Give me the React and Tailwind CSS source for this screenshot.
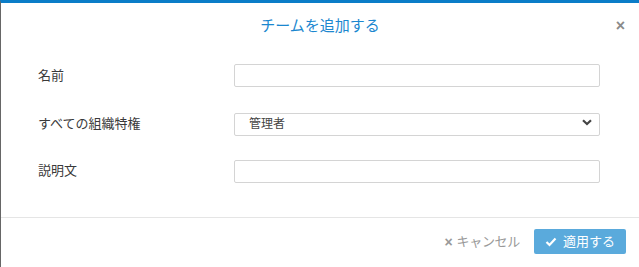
import React, { useState } from "react";

function AddTeamModal() {
  const [name, setName] = useState("");
  const [role, setRole] = useState("admin");
  const [desc, setDesc] = useState("");

  return (
    <div className="h-[267px] w-[639px] bg-white border-l border-[#666] border-t-[3px] border-t-[#0b7dc8] flex flex-col text-[#3a3a3a] [font-family:'Liberation_Sans','Noto_Sans_CJK_JP',sans-serif]">
      <div className="relative h-[45px] flex items-center justify-center">
        <h3 className="text-[15px] text-[#1b87cf] pt-[1px]">チームを追加する</h3>
        <button className="absolute right-[14px] top-[15px] text-[#8a8a8a] text-[16px] font-bold leading-none">
          ×
        </button>
      </div>

      <form className="flex-1 flex flex-col gap-[24px] pt-[16px] pl-[37px] pr-[38px]">
        <div className="flex items-center">
          <label className="w-[196px] text-[13px]">名前</label>
          <input
            type="text"
            value={name}
            onChange={(e) => setName(e.target.value)}
            className="w-[366px] h-[23px] border border-[#d4d4d4] rounded-[2px] px-2 text-[13px] outline-none"
          />
        </div>
        <div className="flex items-center">
          <label className="w-[196px] text-[13px]">すべての組織特権</label>
          <div className="relative w-[366px]">
            <select
              value={role}
              onChange={(e) => setRole(e.target.value)}
              className="appearance-none w-full h-[23px] border border-[#d4d4d4] rounded-[2px] pl-[14px] text-[12px] text-[#444] outline-none bg-white"
            >
              <option value="admin">管理者</option>
              <option value="member">メンバー</option>
            </select>
            <svg
              className="absolute right-[8px] top-[8px] pointer-events-none"
              width="10"
              height="7"
              viewBox="0 0 10 7"
            >
              <path d="M1 1.2 L5 5 L9 1.2" stroke="#444" strokeWidth="2.2" fill="none" />
            </svg>
          </div>
        </div>
        <div className="flex items-center">
          <label className="w-[196px] text-[13px]">説明文</label>
          <input
            type="text"
            value={desc}
            onChange={(e) => setDesc(e.target.value)}
            className="w-[366px] h-[23px] border border-[#d4d4d4] rounded-[2px] px-2 text-[13px] outline-none"
          />
        </div>
      </form>

      <div className="h-[50px] border-t border-[#e5e5e5] flex items-center justify-end gap-[14px] pr-[13px] pb-[2px]">
        <button className="flex items-center gap-[4px] text-[13px] text-[#999] tracking-[-0.3px]">
          <span className="font-bold text-[14px] leading-none">×</span>
          キャンセル
        </button>
        <button className="w-[92px] h-[25px] rounded-[2px] bg-[#5aaadc] text-white text-[13px] flex items-center justify-center gap-[6px]">
          <svg width="12" height="10" viewBox="0 0 12 10">
            <path d="M1.5 5 L4.5 8 L10.5 1.5" stroke="white" strokeWidth="2.2" fill="none" />
          </svg>
          適用する
        </button>
      </div>
    </div>
  );
}

export default function App() {
  return <AddTeamModal />;
}
